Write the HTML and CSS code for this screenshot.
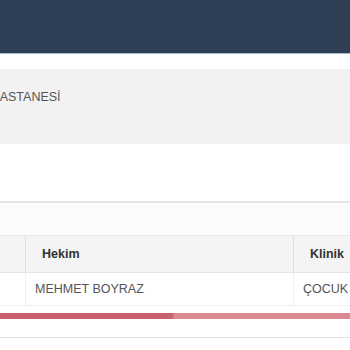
FILE: index.html
```html
<!DOCTYPE html>
<html lang="tr">
<head>
    <meta charset="UTF-8">
    <meta name="viewport" content="width=device-width, initial-scale=1.0">
    <title>Randevu</title>
    <link rel="stylesheet" href="styles.css">
</head>
<body>
    <div class="topbar"></div>

    <div class="info-panel">
        <span class="hospital">ÖZEL HASTANESİ</span>
    </div>

    <div class="section">
        <div class="section-row"></div>
    </div>

    <table class="grid">
        <thead>
            <tr>
                <th class="col-first"></th>
                <th class="col-hekim">Hekim</th>
                <th class="col-klinik">Klinik</th>
            </tr>
        </thead>
        <tbody>
            <tr>
                <td class="col-first"></td>
                <td>MEHMET BOYRAZ</td>
                <td>ÇOCUK SAĞLIĞI</td>
            </tr>
        </tbody>
    </table>

    <div class="progress"></div>
    <div class="footer-line"></div>
</body>
</html>
```

FILE: styles.css
```css
body {
    margin: 0;
    font-family: "Liberation Sans", Arial, sans-serif;
    font-size: 12.5px;
    color: #555;
    background-color: #fff;
    overflow: hidden;
}

.topbar {
    height: 53px;
    background-color: #2f3f56;
    border-bottom: 1px solid #a8bbd0;
}

.info-panel {
    margin-top: 15px;
    height: 75px;
    background-color: #f2f2f2;
    display: flex;
    align-items: center;
    overflow: hidden;
}

.hospital {
    margin-left: -45px;
    margin-bottom: 20px;
    white-space: nowrap;
    font-size: 12.5px;
    color: #555;
}

.section {
    margin-top: 57px;
    border-top: 2px solid #e6e6e6;
}

.section-row {
    height: 32px;
    background-color: #fcfcfc;
    border-bottom: 1px solid #e8e8e8;
}

.grid {
    width: 380px;
    border-collapse: collapse;
    table-layout: fixed;
}

.grid th,
.grid td {
    text-align: left;
    white-space: nowrap;
    overflow: hidden;
}

.grid th {
    height: 36px;
    padding: 0 0 0 16px;
    background-color: #f4f4f4;
    color: #333;
    font-weight: bold;
    border-bottom: 1px solid #e4e4e4;
    border-left: 1px solid #e0e0e0;
}

.grid td {
    height: 32px;
    padding: 0 0 0 9px;
    border-left: 1px solid #efefef;
    border-bottom: 1px solid #f0f0f0;
}

.grid .col-first {
    width: 25px;
    padding: 0;
    border-left: none;
}

.grid .col-hekim {
    width: 251px;
}

.progress {
    margin-top: 7px;
    height: 6px;
    background: linear-gradient(100deg, #c9616d 49%, #da8a91 50%);
}

.footer-line {
    margin-top: 18px;
    border-top: 1px solid #e2e2e2;
}
```
